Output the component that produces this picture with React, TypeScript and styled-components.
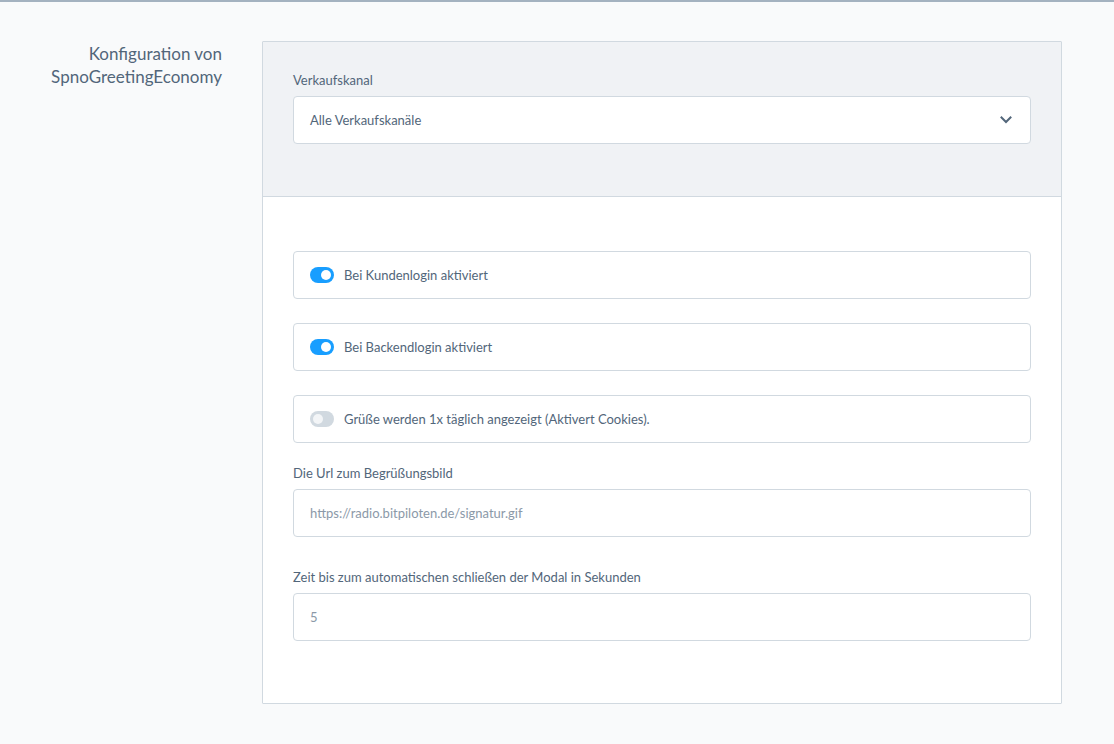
import styled, { createGlobalStyle } from 'styled-components';

const GlobalStyle = createGlobalStyle`
  html, body {
    margin: 0;
    padding: 0;
    background: #f9fafb;
    font-family: Lato, "Noto Sans", sans-serif;
    color: #52667a;
  }
`;

function Toggle({ on }: { on: boolean }) {
  return (
    <Track $on={on}>
      <Knob $on={on} />
    </Track>
  );
}

function ChevronDown() {
  return (
    <svg width="12" height="8" viewBox="0 0 12 8" fill="none">
      <path d="M1.5 1.5 L6 6 L10.5 1.5" stroke="#52667a" strokeWidth="2" strokeLinecap="square" />
    </svg>
  );
}

export default function App() {
  const switches = [
    { label: 'Bei Kundenlogin aktiviert', on: true },
    { label: 'Bei Backendlogin aktiviert', on: true },
    { label: 'Grüße werden 1x täglich angezeigt (Aktivert Cookies).', on: false },
  ];

  return (
    <Page>
      <GlobalStyle />
      <Layout>
        <SideTitle>
          Konfiguration von
          <br />
          SpnoGreetingEconomy
        </SideTitle>
        <Card>
          <CardHeader>
            <FieldLabel>Verkaufskanal</FieldLabel>
            <SelectBox>
              <span>Alle Verkaufskanäle</span>
              <ChevronDown />
            </SelectBox>
          </CardHeader>
          <CardBody>
            {switches.map((s) => (
              <SwitchRow key={s.label}>
                <Toggle on={s.on} />
                <span>{s.label}</span>
              </SwitchRow>
            ))}
            <Field>
              <FieldLabel>Die Url zum Begrüßungsbild</FieldLabel>
              <TextInput>https://radio.bitpiloten.de/signatur.gif</TextInput>
            </Field>
            <Field>
              <FieldLabel>Zeit bis zum automatischen schließen der Modal in Sekunden</FieldLabel>
              <TextInput>5</TextInput>
            </Field>
          </CardBody>
        </Card>
      </Layout>
    </Page>
  );
}

const Page = styled.div`
  min-height: 744px;
  border-top: 2px solid #a4b2c0;
  box-sizing: border-box;
`;

const Layout = styled.div`
  display: grid;
  grid-template-columns: 222px 800px;
  column-gap: 40px;
  padding-top: 39px;
  padding-bottom: 40px;
`;

const SideTitle = styled.h2`
  margin: 0;
  padding-top: 1px;
  text-align: right;
  font-weight: 400;
  font-size: 17px;
  line-height: 23px;
  color: #52667a;
`;

const Card = styled.div`
  border: 1px solid #d1d9e0;
  background: #fff;
  border-radius: 1px;
  width: 800px;
  box-sizing: border-box;
`;

const CardHeader = styled.div`
  background: #f0f2f5;
  border-bottom: 1px solid #d1d9e0;
  padding: 30px 30px 52px;
`;

const CardBody = styled.div`
  padding: 54px 30px 62px;
  display: flex;
  flex-direction: column;
`;

const FieldLabel = styled.label`
  display: block;
  font-size: 13px;
  line-height: 16px;
  margin-bottom: 8px;
  color: #52667a;
`;

const SelectBox = styled.div`
  height: 48px;
  box-sizing: border-box;
  border: 1px solid #d1d9e0;
  border-radius: 4px;
  background: #fff;
  display: flex;
  align-items: center;
  justify-content: space-between;
  padding: 0 18px 0 16px;
  font-size: 13px;
  color: #52667a;
`;

const SwitchRow = styled.div`
  height: 48px;
  box-sizing: border-box;
  border: 1px solid #d1d9e0;
  border-radius: 4px;
  display: flex;
  align-items: center;
  gap: 10px;
  padding: 0 16px;
  font-size: 13px;
  color: #52667a;
  & + & {
    margin-top: 24px;
  }
`;

const Track = styled.span<{ $on: boolean }>`
  width: 24px;
  height: 16px;
  border-radius: 8px;
  background: ${(p) => (p.$on ? '#189eff' : '#d1d9e0')};
  display: flex;
  align-items: center;
  justify-content: ${(p) => (p.$on ? 'flex-end' : 'flex-start')};
  padding: 0 3px;
  box-sizing: border-box;
  flex-shrink: 0;
`;

const Knob = styled.span<{ $on: boolean }>`
  width: 10px;
  height: 10px;
  border-radius: 50%;
  background: ${(p) => (p.$on ? '#fff' : '#f3f5f7')};
`;

const Field = styled.div`
  display: flex;
  flex-direction: column;
  margin-top: 22px;
  & + & {
    margin-top: 32px;
  }
`;

const TextInput = styled.div`
  height: 48px;
  box-sizing: border-box;
  border: 1px solid #d1d9e0;
  border-radius: 4px;
  display: flex;
  align-items: center;
  padding: 0 16px;
  font-size: 13px;
  color: #8b99a8;
`;
